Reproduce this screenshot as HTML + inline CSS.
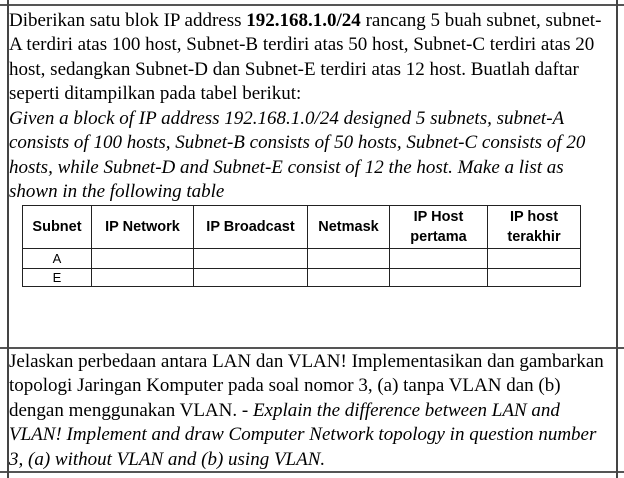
<!DOCTYPE html>
<html><head><meta charset="utf-8"><style>
body{margin:0;width:624px;height:478px;background:#fff;position:relative;overflow:hidden;font-family:"Liberation Serif",serif;color:#000}
.h{position:absolute;left:0;width:624px;height:2px;background:#555}
.v{position:absolute;width:1.5px;background:#444}
.l{position:absolute;left:9px;font-size:19px;line-height:24px;white-space:nowrap}
i{font-style:italic}
table{position:absolute;left:22px;top:205px;border-collapse:collapse;font-family:"Liberation Sans",sans-serif;font-size:14.5px}
td{border:1.5px solid #222;padding:0;text-align:center;line-height:17px;font-size:13px}
th{border:1.5px solid #222;padding:0;font-weight:bold;line-height:20px;height:42px}
</style></head><body>
<div class="h" style="top:4px"></div>
<div class="h" style="top:347px"></div>
<div class="h" style="top:471px"></div>
<div class="v" style="left:7px;top:0;height:478px"></div>
<div class="v" style="left:616px;top:0;height:478px"></div>
<div class="l" style="top:9px">Diberikan satu blok IP address <b>192.168.1.0/24</b> rancang 5 buah subnet, subnet-</div>
<div class="l" style="top:33px">A terdiri atas 100 host, Subnet-B terdiri atas 50 host, Subnet-C terdiri atas 20</div>
<div class="l" style="top:58px">host, sedangkan Subnet-D dan Subnet-E terdiri atas 12 host. Buatlah daftar</div>
<div class="l" style="top:82px">seperti ditampilkan pada tabel berikut:</div>
<div class="l" style="top:107px"><i>Given a block of IP address 192.168.1.0/24 designed 5 subnets, subnet-A</i></div>
<div class="l" style="top:131px"><i>consists of 100 hosts, Subnet-B consists of 50 hosts, Subnet-C consists of 20</i></div>
<div class="l" style="top:156px"><i>hosts, while Subnet-D and Subnet-E consist of 12 the host. Make a list as</i></div>
<div class="l" style="top:180px"><i>shown in the following table</i></div>
<table>
<tr><th style="width:68px">Subnet</th><th style="width:101px">IP Network</th><th style="width:113px">IP Broadcast</th><th style="width:81px">Netmask</th><th style="width:97px">IP Host<br>pertama</th><th style="width:92px">IP host<br>terakhir</th></tr>
<tr><td style="height:19px">A</td><td></td><td></td><td></td><td></td><td></td></tr>
<tr><td style="height:17px">E</td><td></td><td></td><td></td><td></td><td></td></tr>
</table>
<div class="l" style="top:350px">Jelaskan perbedaan antara LAN dan VLAN! Implementasikan dan gambarkan</div>
<div class="l" style="top:374px">topologi Jaringan Komputer pada soal nomor 3, (a) tanpa VLAN dan (b)</div>
<div class="l" style="top:399px">dengan menggunakan VLAN. - <i>Explain the difference between LAN and</i></div>
<div class="l" style="top:423px"><i>VLAN! Implement and draw Computer Network topology in question number</i></div>
<div class="l" style="top:448px"><i>3, (a) without VLAN and (b) using VLAN.</i></div>
</body></html>
